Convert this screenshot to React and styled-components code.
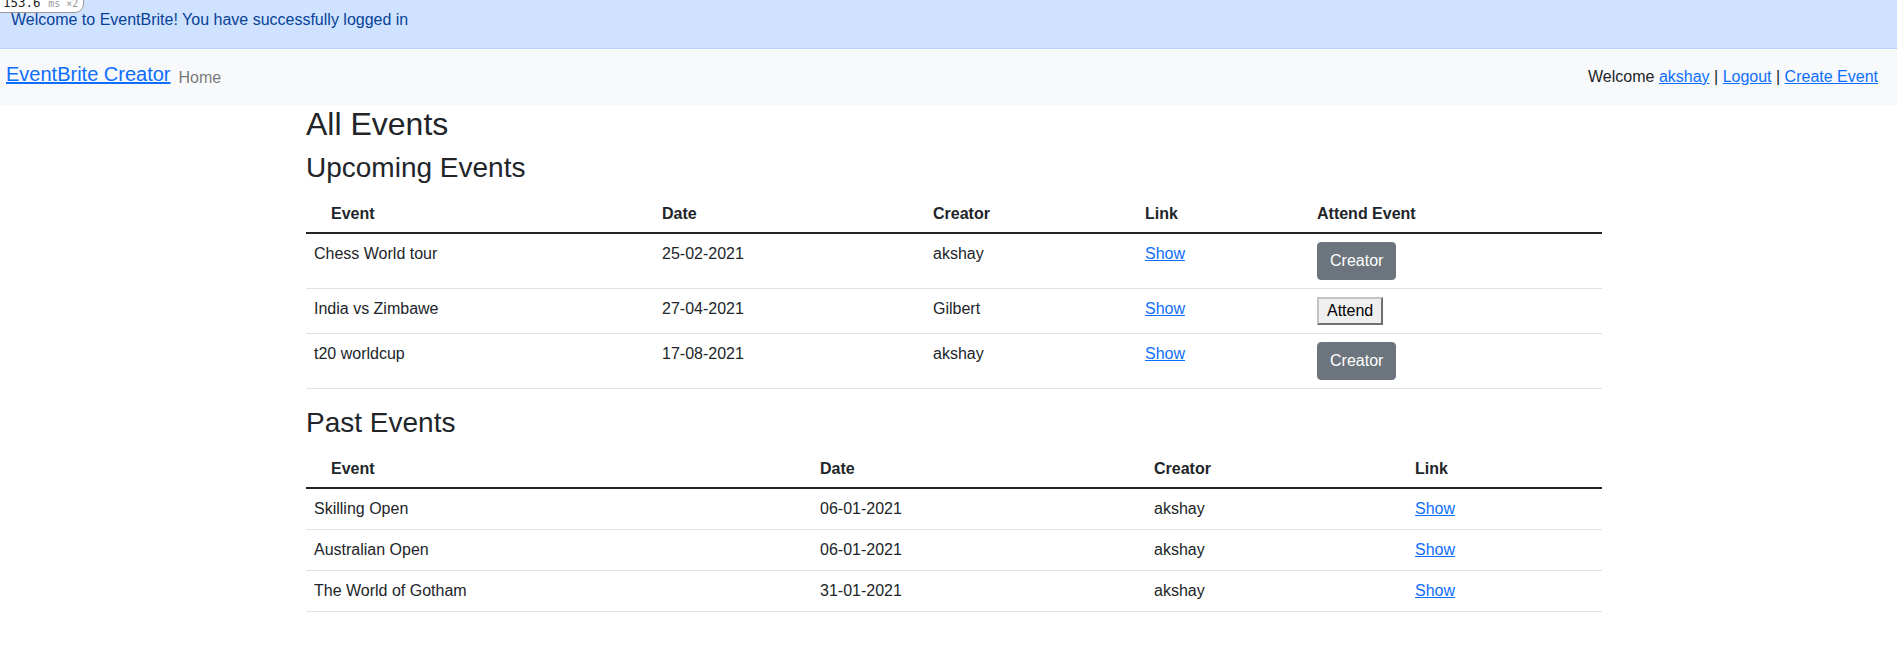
import React from "react";
import styled, { createGlobalStyle } from "styled-components";

const GlobalStyle = createGlobalStyle`
  html, body { margin: 0; padding: 0; }
  body {
    font-family: "Liberation Sans", Arial, sans-serif;
    font-size: 16px;
    line-height: 1.5;
    color: #212529;
    background: #fff;
  }
  * { box-sizing: border-box; }
`;

const Badge = styled.div`
  position: absolute;
  top: -7px;
  left: -1px;
  height: 20px;
  padding: 0 5px 0 3px;
  background: #fff;
  border: 1px solid #9a9a9a;
  border-bottom-right-radius: 9px;
  font-family: "DejaVu Sans Mono", monospace;
  font-size: 12.5px;
  line-height: 18px;
  color: #222;
  white-space: nowrap;
  z-index: 5;
  span { color: #999; font-size: 10px; }
`;

const Alert = styled.div`
  position: relative;
  background: #cfe2ff;
  color: #084298;
  border-bottom: 1px solid #b6d4fe;
  padding: 8px 11px 16px;
  line-height: 24px;
`;

const Navbar = styled.nav`
  display: flex;
  align-items: center;
  justify-content: space-between;
  height: 56px;
  background: #f8f9fa;
  padding: 0 19px 0 6px;
`;

const NavLeft = styled.div`
  display: flex;
  align-items: center;
  gap: 8px;
`;

const Brand = styled.a`
  font-size: 20px;
  line-height: 30px;
  padding-bottom: 7px;
  color: #0d6efd;
  text-decoration: underline;
`;

const NavItem = styled.a`
  font-size: 16px;
  line-height: 24px;
  padding-top: 2px;
  color: rgba(0, 0, 0, 0.55);
  text-decoration: none;
`;

const UserBar = styled.div`
  line-height: 24px;
`;

const Link = styled.a`
  color: #0d6efd;
  text-decoration: underline;
  cursor: pointer;
`;

const Container = styled.main`
  width: 1296px;
  margin-left: calc(50% - 642.5px);
`;

const Title = styled.h2`
  font-size: 32px;
  font-weight: 500;
  line-height: 1.2;
  margin: 0 0 8px;
`;

const SectionTitle = styled.h3`
  font-size: 28px;
  font-weight: 500;
  line-height: 1.2;
  margin: 0 0 8px;
`;

const Table = styled.table`
  width: 100%;
  border-collapse: collapse;
  margin-bottom: 17px;
  vertical-align: top;
`;

const Th = styled.th`
  width: ${(p) => p.$w}px;
  text-align: left;
  font-weight: 700;
  padding: 9px 8px 6px ${(p) => (p.$indent ? 25 : 8)}px;
  border-bottom: 2px solid #212529;
`;

const Td = styled.td`
  padding: 8px;
  border-bottom: 1px solid #dee2e6;
  vertical-align: top;
`;

const CreatorButton = styled.button`
  font-family: inherit;
  font-size: 16px;
  line-height: 24px;
  padding: 6px 12px;
  color: #fff;
  background: #6c757d;
  border: 1px solid #6c757d;
  border-radius: 4px;
  margin: 0;
`;

const AttendButton = styled.button`
  font-family: inherit;
  font-size: 16px;
  line-height: 24px;
  padding: 0 8px;
  color: #000;
  background: #efefef;
  border: 2px outset #c4c4c4;
  border-radius: 0;
  margin: 0;
`;

const upcoming = [
  { name: "Chess World tour", date: "25-02-2021", creator: "akshay", mine: true },
  { name: "India vs Zimbawe", date: "27-04-2021", creator: "Gilbert", mine: false },
  { name: "t20 worldcup", date: "17-08-2021", creator: "akshay", mine: true },
];

const past = [
  { name: "Skilling Open", date: "06-01-2021", creator: "akshay" },
  { name: "Australian Open", date: "06-01-2021", creator: "akshay" },
  { name: "The World of Gotham", date: "31-01-2021", creator: "akshay" },
];

export default function App() {
  return (
    <>
      <GlobalStyle />
      <Badge>
        153.6 <span>ms ×2</span>
      </Badge>
      <Alert>Welcome to EventBrite! You have successfully logged in</Alert>
      <Navbar>
        <NavLeft>
          <Brand>EventBrite Creator</Brand>
          <NavItem>Home</NavItem>
        </NavLeft>
        <UserBar>
          Welcome <Link>akshay</Link> | <Link>Logout</Link> | <Link>Create Event</Link>
        </UserBar>
      </Navbar>
      <Container>
        <Title>All Events</Title>
        <SectionTitle>Upcoming Events</SectionTitle>
        <Table>
          <thead>
            <tr>
              <Th $w={348} $indent>Event</Th>
              <Th $w={271}>Date</Th>
              <Th $w={212}>Creator</Th>
              <Th $w={172}>Link</Th>
              <Th $w={293}>Attend Event</Th>
            </tr>
          </thead>
          <tbody>
            {upcoming.map((e) => (
              <tr key={e.name}>
                <Td>{e.name}</Td>
                <Td>{e.date}</Td>
                <Td>{e.creator}</Td>
                <Td>
                  <Link>Show</Link>
                </Td>
                <Td>
                  {e.mine ? <CreatorButton>Creator</CreatorButton> : <AttendButton>Attend</AttendButton>}
                </Td>
              </tr>
            ))}
          </tbody>
        </Table>
        <SectionTitle>Past Events</SectionTitle>
        <Table>
          <thead>
            <tr>
              <Th $w={506} $indent>Event</Th>
              <Th $w={334}>Date</Th>
              <Th $w={261}>Creator</Th>
              <Th $w={195}>Link</Th>
            </tr>
          </thead>
          <tbody>
            {past.map((e) => (
              <tr key={e.name}>
                <Td>{e.name}</Td>
                <Td>{e.date}</Td>
                <Td>{e.creator}</Td>
                <Td>
                  <Link>Show</Link>
                </Td>
              </tr>
            ))}
          </tbody>
        </Table>
      </Container>
    </>
  );
}
